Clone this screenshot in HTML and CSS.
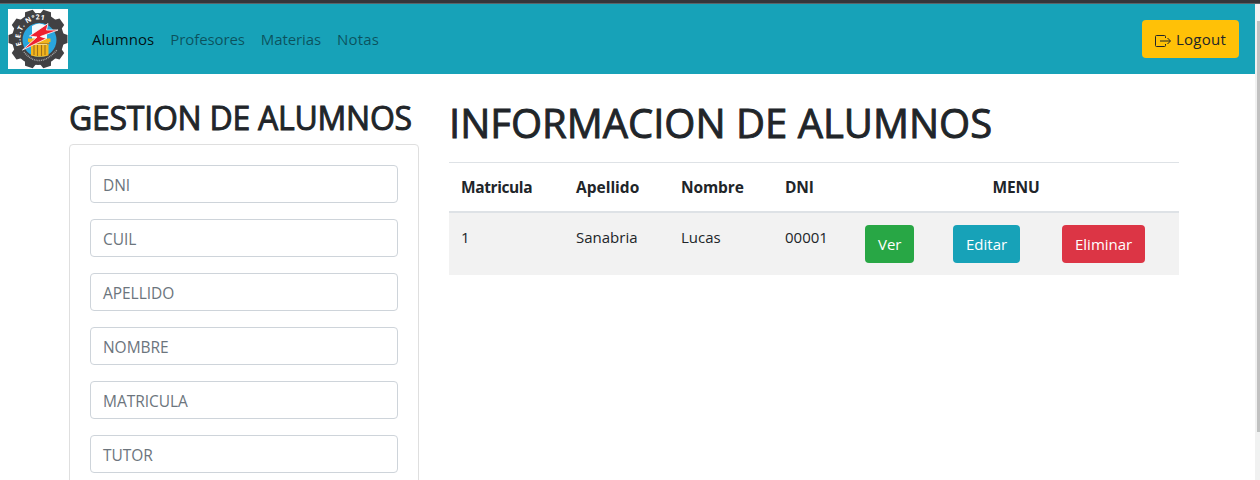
FILE: index.html
```html
<!DOCTYPE html>
<html lang="es">
<head>
<meta charset="utf-8">
<title>Gestion de Alumnos</title>
<link rel="stylesheet" href="styles.css">
</head>
<body>
<div class="chrome-edge"></div>
<div class="viewport">
  <div class="page">
    <nav class="navbar">
      <svg class="logo" viewBox="0 0 60 60" role="img" aria-label="E.E.T. N°21">
        <defs><path id="arc" d="M13.6 36 A18.7 18.7 0 1 1 48 37"/></defs>
        <rect width="60" height="60" fill="#fff"/>
        <g fill="#414143">
          <circle cx="30" cy="30" r="26"/>
          <g id="teeth">
            <path id="tooth" d="M24 6 L26 0.5 H34 L36 6 Z" transform="rotate(18 30 30)"/>
            <use href="#tooth" transform="rotate(36 30 30)"/>
            <use href="#tooth" transform="rotate(72 30 30)"/>
            <use href="#tooth" transform="rotate(108 30 30)"/>
            <use href="#tooth" transform="rotate(144 30 30)"/>
          </g>
          <use href="#teeth" transform="rotate(180 30 30)"/>
        </g>
        <circle cx="31.500" cy="31" r="17" fill="#2aa5dc"/>
        <path d="M24 17 Q31 12 39 17 V44 H24Z" fill="#f4f8fa"/>
        <path d="M20 29.500 H42.500 V33 H41 V35.500 H21.500 V33 H20Z M23 36 H40.500 V46.500 Q32 49 23 46.500Z" fill="#f2b51d"/>
        <path d="M26 36V46M29.500 36V47M33.500 36V47M37 36V46" stroke="#9d701b" stroke-width="1.100"/>
        <path d="M21 34.500H42" stroke="#a87820" stroke-width=".8"/>
        <path d="M40 14.500 L21.500 27 L29 28 L14.500 41 L38.500 29.500 L32.500 27.500 L50 21 L38.500 21Z" fill="#ee2030" stroke="#fff" stroke-width=".8"/>
        <text class="logo-text"><textPath href="#arc" startOffset="0">E.E.T. N°21</textPath></text>
        <path d="M16 43 Q31 61 49 41" fill="none" stroke="#a5a5a5" stroke-width="1.500" stroke-dasharray="1 .8"/>
      </svg>
      <div class="links">
        <a class="link active">Alumnos</a><a class="link profesores">Profesores</a><a class="link materias">Materias</a><a class="link notas">Notas</a>
      </div>
      <a class="btn warning"><svg class="exit" viewBox="0 0 16 16" fill="none" stroke="#212529"><path d="M10.500 5V3.500a1 1 0 0 0-1-1H1.500a1 1 0 0 0-1 1v9a1 1 0 0 0 1 1h8a1 1 0 0 0 1-1V11M5 8h10.200M12.500 5l3 3-3 3"/></svg><span class="logout">Logout</span></a>
    </nav>
    <main class="content">
      <section class="form-col">
        <h2>GESTION DE ALUMNOS</h2>
        <form class="card">
          <div class="field">DNI</div>
          <div class="field">CUIL</div>
          <div class="field">APELLIDO</div>
          <div class="field">NOMBRE</div>
          <div class="field">MATRICULA</div>
          <div class="field">TUTOR</div>
          <div class="field"></div>
        </form>
      </section>
      <section class="info-col">
        <h1>INFORMACION DE ALUMNOS</h1>
        <table class="students">
          <colgroup><col class="c1"><col class="c2"><col class="c3"><col class="c4"><col class="c5"><col class="c6"><col class="c7"></colgroup>
          <thead><tr><th class="matricula">Matricula</th><th class="apellido">Apellido</th><th>Nombre</th><th>DNI</th><th colspan="3" class="center">MENU</th></tr></thead>
          <tbody><tr><td>1</td><td>Sanabria</td><td>Lucas</td><td>00001</td>
          <td><a class="btn success">Ver</a></td><td><a class="btn info">Editar</a></td><td><a class="btn danger">Eliminar</a></td></tr></tbody>
        </table>
      </section>
    </main>
  </div>
  <div class="scrollbar"><div class="thumb"></div></div>
</div>
</body>
</html>
```
FILE: styles.css
```css
* { box-sizing: border-box; }
body {
  margin: 0;
  height: 480px;
  overflow: hidden;
  background: #fff;
  color: #212529;
  font: 400 15px/24px "Open Sans", "Noto Sans", sans-serif;
}
.chrome-edge { height: 4px; background: #35363a; border-bottom: 1px solid #5b6468; }
.viewport { display: flex; height: 476px; }
.page { width: 1255px; overflow: hidden; }
.scrollbar { width: 5px; padding: 17px 0 0 2px; background: #f1f1f1; }
.thumb { height: 411px; background: #c1c1c1; }
.navbar { display: flex; align-items: center; height: 70px; padding: 0 16px 0 8px; background: #17a2b8; }
.logo { width: 60px; height: 60px; }
.logo-text { font: 700 7px "Open Sans", sans-serif; fill: #fff; letter-spacing: .5px; }
.links { display: flex; flex: 1; gap: 16px; margin-left: 24px; }
.link { color: rgba(0, 0, 0, .5); }
.link.active { color: rgba(0, 0, 0, .9); letter-spacing: .09px; }
.profesores { letter-spacing: -.11px; }
.materias { letter-spacing: -.09px; }
.notas { letter-spacing: .15px; }
.btn { display: inline-flex; align-items: center; height: 38px; padding: 0 13px; border-radius: 4px; color: #fff; }
.warning { width: 97px; background: #ffc107; color: #212529; }
.exit { flex: none; width: 16px; height: 16px; margin: 4px 5px 0 0; }
.logout { letter-spacing: .25px; }
.success { width: 49px; background: #28a745; }
.info { width: 67px; background: #17a2b8; }
.danger { width: 83px; background: #dc3545; }
.content { display: flex; gap: 30px; padding: 24px 0 0 69px; }
.form-col { width: 350px; }
.info-col { width: 730px; }
h1, h2 { margin: 0; font-weight: 400; white-space: nowrap; -webkit-text-stroke: .9px #212529; }
h2 { height: 46px; font-size: 32px; line-height: 40px; letter-spacing: -.25px; }
h1 { height: 64px; font-size: 40px; line-height: 50px; }
.card { display: flex; flex-direction: column; gap: 16px; padding: 20px; border: 1px solid #dfdfdf; border-radius: 4px; }
.field { height: 38px; padding: 7px 12px 5px; border: 1px solid #ced4da; border-radius: 4px; color: #6c757d; font-size: 15.5px; letter-spacing: -.05px; }
.students { width: 730px; table-layout: fixed; border-spacing: 0; }
.c1 { width: 115px; }
.c2 { width: 105px; }
.c3 { width: 104px; }
.c4 { width: 80px; }
.c5 { width: 88px; }
.c6 { width: 109px; }
.c7 { width: 129px; }
th, td { padding: 12px; text-align: left; vertical-align: top; }
th { border-top: 1px solid #dee2e6; border-bottom: 2px solid #dee2e6; font-size: 15.5px; letter-spacing: -.12px; }
.matricula { letter-spacing: -.4px; }
.apellido { letter-spacing: 0; }
td { height: 62px; background: #f2f2f2; }
.center { text-align: center; }
```
